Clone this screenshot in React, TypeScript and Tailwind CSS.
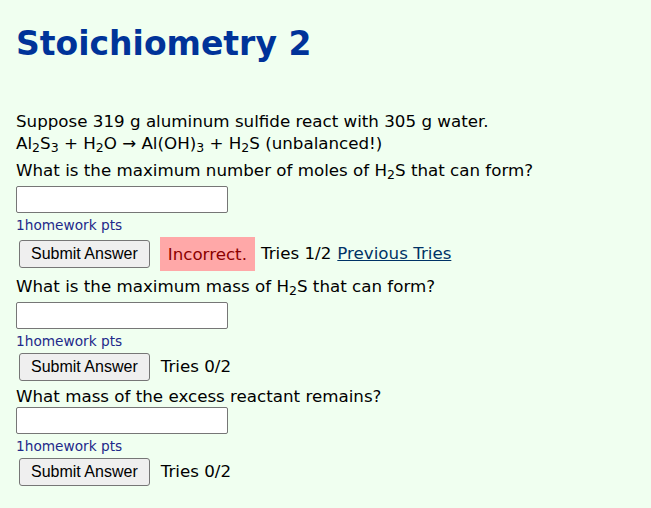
import React from 'react';

const verdana = { fontFamily: '"DejaVu Sans", Verdana, sans-serif' };

interface Question {
  id: string;
  text: React.ReactNode;
  tries: string;
  hasSub?: boolean;
  incorrect?: boolean;
}

const H2S = (
  <>
    H<sub>2</sub>S
  </>
);

const questions: Question[] = [
  {
    id: 'q1',
    text: <>What is the maximum number of moles of {H2S} that can form?</>,
    tries: 'Tries 1/2',
    hasSub: true,
    incorrect: true,
  },
  {
    id: 'q2',
    text: <>What is the maximum mass of {H2S} that can form?</>,
    tries: 'Tries 0/2',
    hasSub: true,
  },
  {
    id: 'q3',
    text: <>What mass of the excess reactant remains?</>,
    tries: 'Tries 0/2',
  },
];

const QuestionBlock: React.FC<{ q: Question; first: boolean }> = ({ q, first }) => (
  <div className={first ? 'mt-[6px] flex flex-col' : 'mt-[5px] flex flex-col'}>
    <div className={q.hasSub ? 'pb-[5px] leading-[20px]' : 'leading-[20px]'}>{q.text}</div>
    <input
      type="text"
      className="mt-[1px] h-[27px] w-[212px] rounded-[2px] border border-[#767676] bg-white"
    />
    <div className="mt-[4px] text-[13.7px] leading-[16px] text-[#1f2a8a]">1homework pts</div>
    <div className="mt-[4px] flex items-center">
      <button
        className="mx-[3px] h-[28px] rounded-[3px] border border-[#767676] bg-[#efefef] px-[11px] text-[16px] text-black"
        style={{ fontFamily: '"Liberation Sans", Arial, sans-serif' }}
      >
        Submit Answer
      </button>
      {q.incorrect && (
        <span className="ml-[7px] inline-block h-[34px] bg-[#ffa8a8] px-[8px] leading-[34px] text-[#8b0000]">
          Incorrect.
        </span>
      )}
      <span className={q.incorrect ? 'ml-[6px]' : 'ml-[8px]'}>{q.tries}</span>
      {q.incorrect && (
        <a href="#" className="ml-[6px] text-[#003366] underline">
          Previous Tries
        </a>
      )}
    </div>
  </div>
);

export default function App() {
  return (
    <div className="min-h-[508px] bg-[#f0fff0] px-4 text-[16.7px] text-black" style={verdana}>
      <h1 className="pt-[24px] text-[33px] font-bold leading-[40px] text-[#003399]">
        Stoichiometry 2
      </h1>
      <p className="mt-[46px] leading-[22px]">
        Suppose 319 g aluminum sulfide react with 305 g water.
        <br />
        Al<sub>2</sub>S<sub>3</sub> + H<sub>2</sub>O → Al(OH)<sub>3</sub> + H<sub>2</sub>S (unbalanced!)
      </p>
      <div className="flex flex-col">
        {questions.map((q, i) => (
          <QuestionBlock key={q.id} q={q} first={i === 0} />
        ))}
      </div>
    </div>
  );
}
